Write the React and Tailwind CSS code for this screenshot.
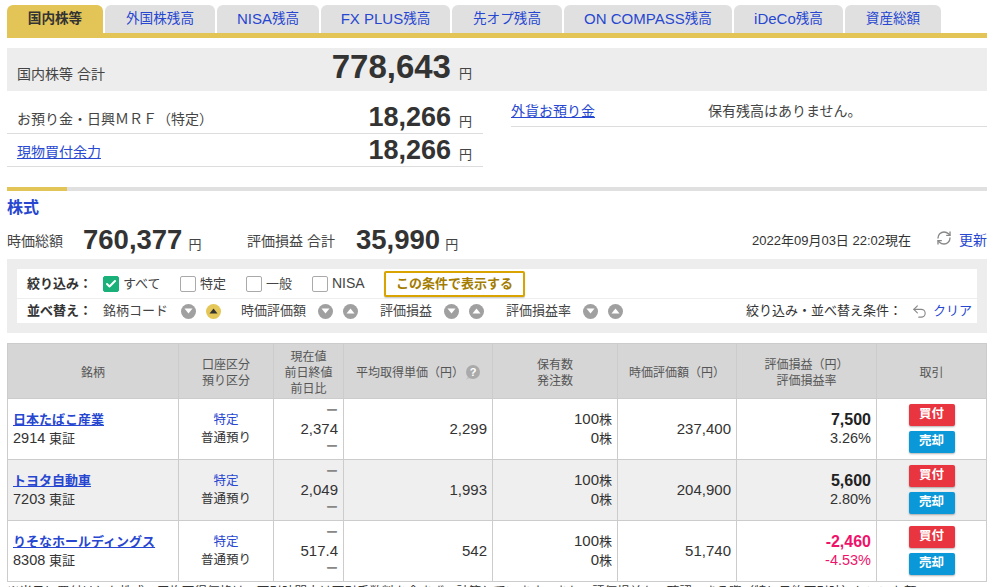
import React from 'react';
import { Check, RefreshCw, Undo2 } from 'lucide-react';

const tabs = [
  { label: '国内株等', width: 'w-[96px]', active: true },
  { label: '外国株残高', width: 'w-[110px]' },
  { latin: 'NISA', label: '残高', width: 'w-[102px]' },
  { latin: 'FX PLUS', label: '残高', width: 'w-[129px]' },
  { label: '先オプ残高', width: 'w-[110px]' },
  { latin: 'ON COMPASS', label: '残高', width: 'w-[168px]' },
  { latin: 'iDeCo', label: '残高', width: 'w-[109px]' },
  { label: '資産総額', width: 'w-[96px]' },
];

const filters = [
  { label: 'すべて', checked: true, width: 'w-[77px]' },
  { label: '特定', width: 'w-[66px]' },
  { label: '一般', width: 'w-[66px]' },
  { label: 'NISA', latin: true, width: 'w-[72px]' },
];

const sorts = [
  { label: '銘柄コード', width: 'w-[138px]', labelWidth: 'w-[78px]', activeUp: true },
  { label: '時価評価額', width: 'w-[139px]', labelWidth: 'w-[77px]' },
  { label: '評価損益', width: 'w-[126px]', labelWidth: 'w-[64px]' },
  { label: '評価損益率', width: 'w-[150px]', labelWidth: 'w-[77px]' },
];

const stocks = [
  { name: '日本たばこ産業', code: '2914', price: '2,374', avg: '2,299', value: '237,400', pl: '7,500', rate: '3.26%' },
  { name: 'トヨタ自動車', code: '7203', price: '2,049', avg: '1,993', value: '204,900', pl: '5,600', rate: '2.80%', shaded: true },
  { name: 'りそなホールディングス', code: '8308', price: '517.4', avg: '542', value: '51,740', pl: '-2,460', rate: '-4.53%', negative: true },
];

const SortArrow = ({ up, active }) => (
  <span className={`flex h-[15px] w-[15px] items-center justify-center rounded-full ${active ? 'bg-[#e5c658]' : 'bg-[#a0a0a0]'}`}>
    <svg width="9" height="6" viewBox="0 0 9 6">
      <path d={up ? 'M4.5 0.5 L8.5 5.5 L0.5 5.5 Z' : 'M0.5 0.5 L8.5 0.5 L4.5 5.5 Z'} fill={active ? '#333333' : '#ffffff'} />
    </svg>
  </span>
);

const Yen = ({ className = 'ml-[8px]' }) => <span className={`text-[13px] text-[#444] ${className}`}>円</span>;

const HelpIcon = () => (
  <svg className="ml-[1px]" width="15" height="15" viewBox="0 0 15 15">
    <path d="M3 11 L1 14.5 L6 13 Z" fill="#c4c4c4" />
    <circle cx="8" cy="7" r="7" fill="#aaaaaa" />
    <text x="8" y="11" textAnchor="middle" fontSize="11" fontWeight="700" fill="#ffffff">?</text>
  </svg>
);

const Th = ({ children }) => (
  <th className="border border-[#cccccc] pt-[3px] text-center text-[12px] font-normal leading-[16px] text-[#555]">{children}</th>
);

const Td = ({ children, className = '' }) => (
  <td className={`border border-[#cccccc] text-[#333] ${className}`}>{children}</td>
);

const App = () => {
  return (
    <div className="h-[587px] w-[994px] overflow-hidden bg-white pl-[7px] pr-[7px] pt-[5px] font-['Liberation_Sans','Noto_Sans_CJK_JP',sans-serif] text-[#333]">
      {/* Tabs */}
      <div className="flex h-[33px] gap-[2px] border-b-[5px] border-[#e3c557]">
        {tabs.map((tab) => (
          <div
            key={tab.width + tab.label + tab.latin}
            className={`flex h-[28px] items-center justify-center rounded-t-[6px] text-[13.6px] ${tab.width} ${tab.active ? 'bg-[#e3c557] font-bold text-[#333]' : 'bg-[#e0e0e0] text-[#2747d1]'}`}
          >
            {tab.latin && <span className="text-[15px]">{tab.latin}</span>}
            {tab.label}
          </div>
        ))}
      </div>

      {/* Total */}
      <div className="mt-[10px] h-[43px] bg-[#ededed]">
        <div className="flex h-full w-[476px] items-end justify-between pb-[7px] pl-[10px] pr-[11px]">
          <span className="pb-[1px] text-[14px] leading-[18px] text-[#444]">国内株等 合計</span>
          <span className="flex items-baseline">
            <span className="text-[33px] font-bold leading-[34px] text-[#333]">778,643</span>
            <Yen />
          </span>
        </div>
      </div>

      <div className="grid grid-cols-[476px_476px] gap-[28px]">
        <div>
          <div className="flex h-[43px] items-end justify-between border-b border-[#dddddd] pb-[1px] pl-[10px] pr-[11px]">
            <span className="pb-[4px] text-[14px] leading-[18px] text-[#444]">お預り金・日興ＭＲＦ（特定）</span>
            <span className="flex items-baseline">
              <span className="text-[27px] font-bold leading-[30px]">18,266</span>
              <Yen />
            </span>
          </div>
          <div className="flex h-[33px] items-end justify-between border-b border-[#dddddd] pb-[1px] pl-[10px] pr-[11px]">
            <span className="pb-[4px] text-[14px] leading-[18px] text-[#2747d1] underline">現物買付余力</span>
            <span className="flex items-baseline">
              <span className="text-[27px] font-bold leading-[30px]">18,266</span>
              <Yen />
            </span>
          </div>
        </div>
        <div className="mt-[9px] flex h-[27px] items-center border-b border-[#dddddd] pb-[3px] text-[14px]">
          <span className="w-[197px] text-[#2747d1] underline">外貨お預り金</span>
          <span className="text-[#444]">保有残高はありません。</span>
        </div>
      </div>

      {/* Section bar */}
      <div className="mt-[20px] h-[4px] bg-[#e0e0e0]">
        <div className="h-full w-[60px] bg-[#e3c557]" />
      </div>
      <h2 className="mt-[8px] text-[16px] font-bold leading-[18px] text-[#2747d1]">株式</h2>

      {/* Summary */}
      <div className="mt-[7px] flex h-[32px] items-center">
        <span className="w-[76px] pt-[3px] text-[14px] text-[#444]">時価総額</span>
        <span className="flex w-[164px] items-baseline">
          <span className="text-[27.5px] font-bold leading-[30px]">760,377</span>
          <Yen className="ml-[6px]" />
        </span>
        <span className="w-[109px] pt-[3px] text-[14px] text-[#444]">評価損益 合計</span>
        <span className="flex items-baseline">
          <span className="text-[27.5px] font-bold leading-[30px]">35,990</span>
          <Yen className="ml-[5px]" />
        </span>
        <span className="ml-auto pt-[2px] text-[13px] text-[#333]">2022年09月03日 22:02現在</span>
        <RefreshCw className="ml-[25px] mt-[-5px] h-[16px] w-[16px] text-[#888]" strokeWidth={2} />
        <span className="ml-[7px] pt-[1px] text-[14px] text-[#2747d1]">更新</span>
      </div>

      {/* Filter */}
      <div className="mt-[3px] h-[74px] bg-[#ededed] p-[10px]">
        <div className="h-[54px] bg-white text-[13px]">
          <div className="flex h-[30px] items-center border-b border-[#eeeeee] pl-[10px]">
            <span className="w-[76px] font-bold text-[#333]">絞り込み：</span>
            {filters.map((f) => (
              <label key={f.label} className={`flex items-center gap-[4px] ${f.width}`}>
                <span className={`flex h-[16px] w-[16px] items-center justify-center rounded-[2px] border ${f.checked ? 'border-[#19b07a] bg-[#19b07a]' : 'border-[#aaaaaa] bg-white'}`}>
                  {f.checked && <Check className="h-[12px] w-[12px] text-white" strokeWidth={4} />}
                </span>
                <span className={`text-[#444] ${f.latin ? 'text-[14px]' : ''}`}>{f.label}</span>
              </label>
            ))}
            <button className="flex h-[26px] w-[141px] items-center justify-center rounded-[2px] border-2 border-[#d9a400] bg-white text-[13px] font-bold text-[#a37c00] shadow-[0_1px_1px_rgba(0,0,0,0.2)]">
              この条件で表示する
            </button>
          </div>
          <div className="flex h-[24px] items-center pl-[10px] pr-[5px]">
            <span className="w-[76px] font-bold text-[#333]">並べ替え：</span>
            {sorts.map((s) => (
              <div key={s.label} className={`flex items-center ${s.width}`}>
                <span className={`text-[#444] ${s.labelWidth}`}>{s.label}</span>
                <span className="flex gap-[10px]">
                  <SortArrow />
                  <SortArrow up active={s.activeUp} />
                </span>
              </div>
            ))}
            <span className="ml-auto text-[#333]">絞り込み・並べ替え条件：</span>
            <Undo2 className="ml-[9px] h-[17px] w-[17px] text-[#888]" strokeWidth={1.6} />
            <span className="ml-[5px] text-[#2747d1]">クリア</span>
          </div>
        </div>
      </div>

      {/* Holdings table */}
      <table className="mt-[10px] w-[980px] table-fixed border-collapse">
        <colgroup>
          <col className="w-[171px]" />
          <col className="w-[95px]" />
          <col className="w-[70px]" />
          <col className="w-[149px]" />
          <col className="w-[125px]" />
          <col className="w-[119px]" />
          <col className="w-[140px]" />
          <col className="w-[110px]" />
        </colgroup>
        <thead>
          <tr className="h-[55px] bg-[#d6d6d6]">
            <Th>銘柄</Th>
            <Th>口座区分<br />預り区分</Th>
            <Th>現在値<br />前日終値<br />前日比</Th>
            <Th>
              <span className="inline-flex items-center">
                平均取得単価（円）
                <HelpIcon />
              </span>
            </Th>
            <Th>保有数<br />発注数</Th>
            <Th>時価評価額（円）</Th>
            <Th>評価損益（円）<br />評価損益率</Th>
            <Th>取引</Th>
          </tr>
        </thead>
        <tbody>
          {stocks.map((stock) => (
            <tr key={stock.code} className={`h-[61px] ${stock.shaded ? 'bg-[#efefef]' : 'bg-white'}`}>
              <Td className="pl-[5px] leading-[18px]">
                <div className="text-[13px] font-bold text-[#2747d1] underline">{stock.name}</div>
                <div className="text-[13px]"><span className="text-[14.5px]">{stock.code}</span> 東証</div>
              </Td>
              <Td className="text-center text-[12.5px] leading-[18px]">
                <div className="text-[#2747d1]">特定</div>
                <div>普通預り</div>
              </Td>
              <Td className="pr-[5px] text-right leading-[18px]">
                <div className="text-[12px] font-bold text-[#888]">ー</div>
                <div className="text-[15px]">{stock.price}</div>
                <div className="text-[12px] font-bold text-[#888]">ー</div>
              </Td>
              <Td className="pr-[5px] text-right text-[15px]">{stock.avg}</Td>
              <Td className="pr-[5px] text-right text-[15px] leading-[18px]">
                <div>100<span className="text-[13px]">株</span></div>
                <div>0<span className="text-[13px]">株</span></div>
              </Td>
              <Td className="pr-[5px] text-right text-[15px]">{stock.value}</Td>
              <Td className="pr-[5px] text-right leading-[18px]">
                <div className={`text-[16px] font-bold ${stock.negative ? 'text-[#f0126a]' : 'text-[#222]'}`}>{stock.pl}</div>
                <div className={`text-[14.5px] ${stock.negative ? 'text-[#f0126a]' : ''}`}>{stock.rate}</div>
              </Td>
              <Td className="pb-[2px]">
                <div className="flex flex-col items-center gap-[5px]">
                  <button className="h-[22px] w-[46px] rounded-[2px] bg-[#e8353f] text-[12.5px] font-bold text-white shadow-[0_1px_2px_rgba(0,0,0,0.3)]">買付</button>
                  <button className="h-[22px] w-[46px] rounded-[2px] bg-[#0a98d8] text-[12.5px] font-bold text-white shadow-[0_1px_2px_rgba(0,0,0,0.3)]">売却</button>
                </div>
              </Td>
            </tr>
          ))}
        </tbody>
      </table>

      <p className="mt-[1px] whitespace-nowrap text-[12.5px] leading-[18px] text-[#333]">
        ※当日に買付けした株式の平均取得価格は、取引時間中は取引手数料を含まず、計算しています。また、評価損益も、確認できる際（特に予約取引時）といいた額
      </p>
    </div>
  );
};

export default App;
